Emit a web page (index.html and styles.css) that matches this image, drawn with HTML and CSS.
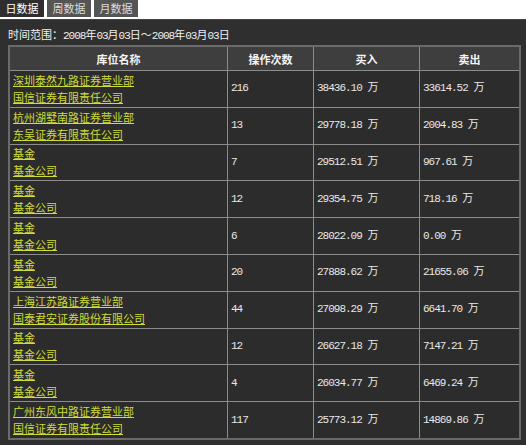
FILE: index.html
```html
<!DOCTYPE html>
<html>
<head>
<meta charset="utf-8">
<link rel="stylesheet" href="styles.css">
</head>
<body>
<div class="tabs">
  <span class="tab active">日数据</span>
  <span class="tab">周数据</span>
  <span class="tab">月数据</span>
</div>
<div class="panel">
  <div class="range">时间范围：<span class="num">2008</span>年<span class="num">03</span>月<span class="num">03</span>日～<span class="num">2008</span>年<span class="num">03</span>月<span class="num">03</span>日</div>
  <table class="grid">
    <thead>
      <tr><th class="c1">库位名称</th><th class="c2">操作次数</th><th class="c3">买入</th><th class="c4">卖出</th></tr>
    </thead>
    <tbody>
      <tr><td><a>深圳泰然九路证券营业部</a><br><a>国信证券有限责任公司</a></td><td>216</td><td>38436.10 万</td><td>33614.52 万</td></tr>
      <tr><td><a>杭州湖墅南路证券营业部</a><br><a>东吴证券有限责任公司</a></td><td>13</td><td>29778.18 万</td><td>2004.83 万</td></tr>
      <tr><td><a>基金</a><br><a>基金公司</a></td><td>7</td><td>29512.51 万</td><td>967.61 万</td></tr>
      <tr><td><a>基金</a><br><a>基金公司</a></td><td>12</td><td>29354.75 万</td><td>718.16 万</td></tr>
      <tr><td><a>基金</a><br><a>基金公司</a></td><td>6</td><td>28022.09 万</td><td>0.00 万</td></tr>
      <tr><td><a>基金</a><br><a>基金公司</a></td><td>20</td><td>27888.62 万</td><td>21655.06 万</td></tr>
      <tr><td><a>上海江苏路证券营业部</a><br><a>国泰君安证券股份有限公司</a></td><td>44</td><td>27098.29 万</td><td>6641.70 万</td></tr>
      <tr><td><a>基金</a><br><a>基金公司</a></td><td>12</td><td>26627.18 万</td><td>7147.21 万</td></tr>
      <tr><td><a>基金</a><br><a>基金公司</a></td><td>4</td><td>26034.77 万</td><td>6469.24 万</td></tr>
      <tr><td><a>广州东风中路证券营业部</a><br><a>国信证券有限责任公司</a></td><td>117</td><td>25773.12 万</td><td>14869.86 万</td></tr>
    </tbody>
  </table>
</div>
</body>
</html>
```
FILE: styles.css
```css
html, body {
  margin: 0;
  padding: 0;
  background: #ffffff;
  font-family: "Noto Sans CJK SC", "DejaVu Sans", sans-serif;
  font-size: 12px;
}
.tabs {
  display: flex;
  gap: 3px;
  height: 18px;
  background: #fff;
}
.tab {
  width: 44px;
  height: 17px;
  line-height: 17px;
  text-align: center;
  background: #555555;
  color: #dddddd;
  font-size: 11px;
}
.tab.active {
  background: #2e2e2e;
  color: #ffffff;
}
.panel {
  margin-top: 1px;
  background: #2f2f2f;
  padding: 7px 5px 7px 8px;
  height: 426px;
  box-sizing: border-box;
  border-top: 1px solid #444;
}
.range {
  color: #f0f0f0;
  font-size: 11px;
  line-height: 14px;
  height: 16px;
  margin-bottom: 2px;
}
.num {
  font-family: "Liberation Mono", monospace;
  letter-spacing: -1px;
}
.grid {
  width: 513px;
  border-collapse: collapse;
  border: 2px solid #6a6a6a;
  table-layout: fixed;
}
.grid th, .grid td {
  border: 1px solid #8c8c8c;
  padding: 0 3px;
}
.grid th {
  background: #3e3e3e;
  color: #f4f4f4;
  font-weight: bold;
  height: 23px;
  font-size: 11px;
  text-align: center;
}
.c1 { width: 211px; }
.c2 { width: 79px; }
.c3 { width: 99px; }
.grid td {
  background: #2c2c2c;
  color: #e8e8e8;
  height: 35.8px;
  line-height: 17px;
  font-size: 11px;
  font-family: "Liberation Mono", "Noto Sans CJK SC", monospace;
  letter-spacing: -1px;
  vertical-align: middle;
}
.grid td:first-child {
  font-family: "Noto Sans CJK SC", sans-serif;
  font-size: 11px;
  letter-spacing: 0;
}
.grid a {
  color: #cfdc3a;
  text-decoration: underline;
}
```
